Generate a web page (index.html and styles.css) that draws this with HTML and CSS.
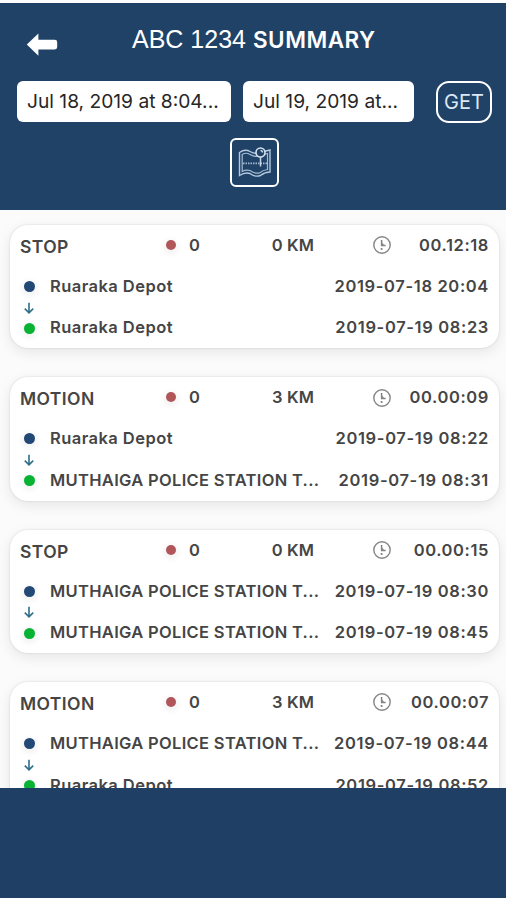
FILE: index.html
```html
<!DOCTYPE html>
<html lang="en">
<head>
    <meta charset="UTF-8">
    <meta name="viewport" content="width=device-width, initial-scale=1.0">
    <title>ABC 1234 Summary</title>
    <link rel="stylesheet" href="styles.css">
</head>
<body>
    <!-- Shared icons -->
    <svg class="sprite" aria-hidden="true">
        <symbol id="clock" viewBox="0 0 20 20">
            <circle cx="10" cy="10" r="8.2" fill="none" stroke="#858585" stroke-width="1.4"/>
            <path d="M9.6 5v5.6h4" fill="none" stroke="#808080" stroke-width="1.5"/>
            <path d="M9.6 7l3 3.4h-3z" fill="#8c8c8c"/>
            <path d="M9.6 13v2" fill="none" stroke="#8a8a8a" stroke-width="1.8"/>
        </symbol>
        <symbol id="down" viewBox="0 0 12 12">
            <path d="M6 .8v9.8M1.8 6.6L6 10.8l4.2-4.2" fill="none" stroke="#2f6f88" stroke-width="1.6"/>
        </symbol>
    </svg>

    <div class="app">
        <header class="header">
            <div class="title-bar">
                <button class="back" aria-label="Back">
                    <svg width="32" height="24" viewBox="0 0 32 24"><path d="M.8 11.6L12.4.4v6.4h16.4a2.4 2.4 0 0 1 2.4 2.4v4.8a2.4 2.4 0 0 1-2.4 2.4H12.4v6.4z" fill="#fff"/></svg>
                </button>
                <h1 class="title"><span class="vehicle">ABC 1234</span><span class="summary">SUMMARY</span></h1>
            </div>
            <div class="filters">
                <button class="date date-from">Jul 18, 2019 at 8:04...</button>
                <button class="date date-to">Jul 19, 2019 at...</button>
                <button class="get">GET</button>
            </div>
            <button class="map" aria-label="Map">
                <svg width="34" height="32" viewBox="0 0 34 32" fill="none">
                    <path d="M1.5 5.5Q7 1.5 12 4.5Q17 7.5 22 5.5L32 3V25Q27 25 22.5 28.5Q17.5 30.5 12 26.5Q7 25 1.5 28.5Z" stroke="#b4cae0" stroke-width="1.4"/>
                    <path d="M4.2 7.5Q8 5 12 7.5Q17 10.5 22 8.5L29.5 6.5V22.5Q25 23 21.5 26Q17 27 12 23.5Q8 22.5 4.2 24.5Z" stroke="#a3bcd5" stroke-width="1.2"/>
                    <path d="M5 16.3h24" stroke="#9fb9d3" stroke-width="1.8" stroke-dasharray="1.5 1"/>
                    <circle cx="22.5" cy="5.5" r="4.5" fill="#214267" stroke="#d2e1f0" stroke-width="1.6"/>
                    <path d="M22.5 10v9.5M22.5 3.5a2 2 0 0 1 2 2" stroke="#c5d7e9" stroke-width="1.5"/>
                </svg>
            </button>
        </header>

        <main class="trips">
            <article class="trip">
                <div class="stats">
                    <h2 class="state">STOP</h2>
                    <span class="alerts"><i class="dot red"></i>0</span>
                    <span class="distance">0 KM</span>
                    <svg class="clock"><use href="#clock"/></svg>
                    <span class="duration">00.12:18</span>
                </div>
                <div class="route">
                    <div class="markers"><i class="dot blue"></i><svg class="down"><use href="#down"/></svg><i class="dot green"></i></div>
                    <div class="legs">
                        <div class="leg"><span class="place">Ruaraka Depot</span><time>2019-07-18 20:04</time></div>
                        <div class="leg"><span class="place">Ruaraka Depot</span><time>2019-07-19 08:23</time></div>
                    </div>
                </div>
            </article>

            <article class="trip">
                <div class="stats">
                    <h2 class="state">MOTION</h2>
                    <span class="alerts"><i class="dot red"></i>0</span>
                    <span class="distance">3 KM</span>
                    <svg class="clock"><use href="#clock"/></svg>
                    <span class="duration">00.00:09</span>
                </div>
                <div class="route">
                    <div class="markers"><i class="dot blue"></i><svg class="down"><use href="#down"/></svg><i class="dot green"></i></div>
                    <div class="legs">
                        <div class="leg"><span class="place">Ruaraka Depot</span><time>2019-07-19 08:22</time></div>
                        <div class="leg"><span class="place long">MUTHAIGA POLICE STATION T...</span><time>2019-07-19 08:31</time></div>
                    </div>
                </div>
            </article>

            <article class="trip">
                <div class="stats">
                    <h2 class="state">STOP</h2>
                    <span class="alerts"><i class="dot red"></i>0</span>
                    <span class="distance">0 KM</span>
                    <svg class="clock"><use href="#clock"/></svg>
                    <span class="duration">00.00:15</span>
                </div>
                <div class="route">
                    <div class="markers"><i class="dot blue"></i><svg class="down"><use href="#down"/></svg><i class="dot green"></i></div>
                    <div class="legs">
                        <div class="leg"><span class="place long">MUTHAIGA POLICE STATION T...</span><time>2019-07-19 08:30</time></div>
                        <div class="leg"><span class="place long">MUTHAIGA POLICE STATION T...</span><time>2019-07-19 08:45</time></div>
                    </div>
                </div>
            </article>

            <article class="trip">
                <div class="stats">
                    <h2 class="state">MOTION</h2>
                    <span class="alerts"><i class="dot red"></i>0</span>
                    <span class="distance">3 KM</span>
                    <svg class="clock"><use href="#clock"/></svg>
                    <span class="duration">00.00:07</span>
                </div>
                <div class="route">
                    <div class="markers"><i class="dot blue"></i><svg class="down"><use href="#down"/></svg><i class="dot green"></i></div>
                    <div class="legs">
                        <div class="leg"><span class="place long">MUTHAIGA POLICE STATION T...</span><time>2019-07-19 08:44</time></div>
                        <div class="leg"><span class="place">Ruaraka Depot</span><time>2019-07-19 08:52</time></div>
                    </div>
                </div>
            </article>
        </main>

        <footer class="footer"></footer>
    </div>
</body>
</html>
```
FILE: styles.css
```css
* {
    margin: 0;
    padding: 0;
    box-sizing: border-box;
}

body {
    font-family: Inter, "Liberation Sans", sans-serif;
    background: #ffffff;
    color: #454545;
}

button {
    border: none;
    background: none;
    font: inherit;
    cursor: pointer;
}

.sprite {
    display: none;
}

.app {
    display: flex;
    flex-direction: column;
    height: 900px;
    padding: 3px 1px 2px 0;
    overflow: hidden;
}

.header {
    display: flex;
    flex-direction: column;
    align-items: center;
    height: 207px;
    flex-shrink: 0;
    background: #214267;
    color: #ffffff;
}

.title-bar {
    display: flex;
    width: 100%;
    height: 78px;
    padding-left: 26px;
}

.back {
    width: 32px;
    height: 24px;
    margin-top: 30px;
}

.back svg {
    display: block;
}

.title {
    display: flex;
    align-items: baseline;
    gap: 7px;
    margin: 21px 0 0 74px;
    line-height: 30px;
    white-space: nowrap;
}

.vehicle {
    font-family: "Liberation Sans", sans-serif;
    font-size: 25px;
    font-weight: 400;
}

.summary {
    font-size: 22.5px;
    font-weight: 600;
    letter-spacing: 0.5px;
}

.filters {
    display: flex;
    width: 100%;
    padding-left: 17px;
}

.date {
    height: 41px;
    padding: 0 0 2px 10px;
    border-radius: 6px;
    background: #ffffff;
    color: #262626;
    font-size: 19.2px;
    text-align: left;
    white-space: nowrap;
}

.date-from {
    width: 214px;
    margin-right: 12px;
}

.date-to {
    width: 171px;
    margin-right: 22px;
}

.get {
    width: 56px;
    height: 42px;
    border: 2.5px solid #ffffff;
    border-radius: 13px;
    color: #dce9f6;
    font-size: 20px;
}

.map {
    display: flex;
    align-items: center;
    justify-content: center;
    width: 49px;
    height: 49px;
    margin: 15px 0 0 3px;
    border: 2.5px solid #ffffff;
    border-radius: 6px;
}

.trips {
    display: flex;
    flex-direction: column;
    gap: 29px;
    flex: 1;
    min-height: 0;
    padding: 15px 7px 0 10px;
    overflow: hidden;
    background: #fbfbfb;
}

.trip {
    flex-shrink: 0;
    height: 123.4px;
    padding: 0 10px;
    border-radius: 18px;
    background: #ffffff;
    box-shadow: 0 4px 14px rgba(0, 0, 0, 0.09), 0 0 2px rgba(0, 0, 0, 0.15);
    font-size: 16.5px;
    font-weight: 600;
    letter-spacing: 0.45px;
    line-height: 41.6px;
    white-space: nowrap;
}

.stats {
    display: grid;
    grid-template-columns: 146px 80px 68px 78px 1fr;
    align-items: center;
    height: 41px;
}

.state {
    padding-top: 2px;
    font-size: 17.5px;
    font-weight: 600;
    letter-spacing: 0.4px;
    line-height: 38px;
}

.alerts {
    display: flex;
    align-items: center;
    gap: 13px;
}

.distance {
    letter-spacing: 0.1px;
    text-align: right;
}

.clock {
    width: 20px;
    height: 20px;
    margin-top: -1px;
    justify-self: end;
}

.duration {
    letter-spacing: 0.6px;
    text-align: right;
}

.dot {
    width: 10px;
    height: 10px;
    border-radius: 50%;
    box-shadow: 0 2px 5px 3px rgba(0, 0, 0, 0.045);
}

.dot.red {
    margin-top: -2px;
    background: #b05558;
}

.dot.blue {
    width: 11px;
    height: 11px;
    background: #234876;
}

.dot.green {
    width: 11px;
    height: 11px;
    background: #08b334;
}

.route {
    display: flex;
    gap: 12px;
}

.markers {
    display: flex;
    flex-direction: column;
    align-items: center;
    justify-content: space-between;
    width: 18px;
    height: 53px;
    margin-top: 15px;
}

.down {
    width: 12px;
    height: 12px;
}

.legs {
    flex: 1;
}

.leg {
    display: flex;
    justify-content: space-between;
    height: 41.4px;
}

.leg time {
    letter-spacing: 0.65px;
}

.long {
    letter-spacing: 0.32px;
}

.footer {
    height: 110px;
    flex-shrink: 0;
    background: #1f4064;
}
```
